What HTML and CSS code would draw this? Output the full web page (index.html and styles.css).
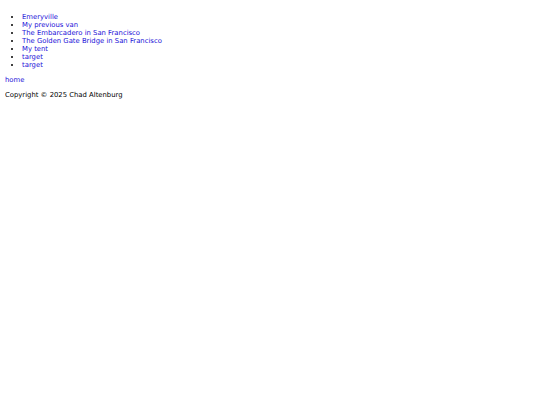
FILE: index.html
```html
<!DOCTYPE html>
<html>
<head>
<meta charset="utf-8">
<link rel="stylesheet" href="styles.css">
</head>
<body class="page">
<ul class="links">
<li><a href="#">Emeryville</a></li>
<li><a href="#">My previous van</a></li>
<li><a href="#">The Embarcadero in San Francisco</a></li>
<li><a href="#">The Golden Gate Bridge in San Francisco</a></li>
<li><a href="#">My tent</a></li>
<li><a href="#">target</a></li>
<li><a href="#">target</a></li>
</ul>
<p class="home"><a href="#">home</a></p>
<p class="copy">Copyright © 2025 Chad Altenburg</p>
</body>
</html>
```
FILE: styles.css
```css
html { background: #fff; }
.page {
  margin: 6px 5px 5px;
  font-family: "DejaVu Sans", Verdana, sans-serif;
  font-size: 6.85px;
  line-height: 8px;
  color: #000;
}
.links {
  margin: 7px 0;
  padding-left: 17px;
}
.page a { color: #1a10d8; text-decoration: none; }
.home, .copy { margin: 7px 0; }
```
